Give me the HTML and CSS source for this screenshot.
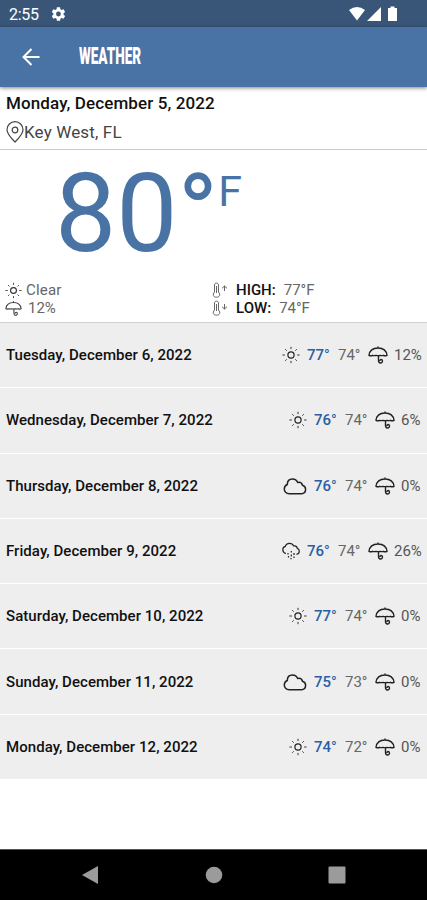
FILE: index.html
```html
<!DOCTYPE html>
<html lang="en">
<head>
    <meta charset="UTF-8">
    <meta name="viewport" content="width=device-width, initial-scale=1.0">
    <title>Weather</title>
    <link rel="stylesheet" href="styles.css">
</head>
<body>

<!-- shared icons -->
<svg class="sprite" width="0" height="0">
    <symbol id="sun" viewBox="0 0 18 18">
        <circle cx="9" cy="9" r="3.1"/>
        <path stroke-width=".9" d="M9 .8v2.300M9 14.900v2.300M.4 9h2.500M15.100 9h2.500M3.200 3.200l1.500 1.500M13.300 13.300l1.500 1.500M3.200 14.800l1.500-1.500M13.300 4.700l1.500-1.500"/>
    </symbol>
    <symbol id="umbrella" viewBox="0 0 20 18">
        <path d="M1 9.300C1.500 5.300 4.500 2 10 2s8.500 3.300 9 7.300q-1.800.9-3.600 0-1.600.7-3.400 0-2 .6-4 0-1.800.7-3.400 0-1.800.9-3.600 0zM10 .6V2"/>
        <path d="M10.500 9.500v5c0 3.300 4 3.200 4 .6 0-2.100-2.500-2.200-2.500-.2"/>
    </symbol>
    <symbol id="cloud" viewBox="0 0 24 18">
        <path d="M6.300 16.700C3 16.700 1.300 14.500 1.300 12c0-2.300 1.200-3.800 3-4.500C4.300 4.200 6.300 2 9.500 2c2.500 0 4.300 1.300 5.200 3.500 2.500-.5 4.300.7 4.800 2.800 2 .5 3.100 2 3.100 4 0 2.500-1.600 4.400-4.100 4.400z"/>
    </symbol>
    <symbol id="rain" viewBox="0 0 18 18">
        <path d="M4 11.500C2 11 .8 9.600.8 7.700c0-1.700 1-2.900 2.500-3.300C3.800 2.500 5.300 1.300 7.500 1.300c2 0 3.400.9 4.200 2.600 2-.2 3.400.9 3.600 2.500 1.400.5 2 1.500 2 2.800 0 1.700-1 2.800-2.800 3.100"/>
        <path d="M6 11v1.500M9.300 9v1.500M12 11v2M6.500 14v1.500M9.300 12.500v2M9 16v1.300M12 14.500v1.500"/>
    </symbol>
    <symbol id="thermo" viewBox="0 0 9 16">
        <path d="M2.500 10V3c0-2.500 4-2.500 4 0v7c2.500 2.800 1 5.200-2 5.200S0 12.800 2.500 10zM4.500 4v7"/>
    </symbol>
</svg>

<div class="status-bar">
    <span class="clock">2:55</span>
    <svg class="gear" viewBox="0 0 24 24"><path fill-rule="evenodd" d="M19.400 13l2.100 1.700-2.100 3.600-2.500-1-1.700 1-.4 2.700h-4.300l-.4-2.700-1.800-1-2.500 1-2.100-3.600L5.800 13v-2L3.700 9.300l2.100-3.600 2.500 1 1.800-1 .4-2.700h4.300l.4 2.700 1.700 1 2.500-1 2.100 3.600-2.100 1.700zM12.600 8.800a3.200 3.200 0 1 0 0 6.400 3.200 3.200 0 0 0 0-6.400z"/></svg>
    <svg class="signals" viewBox="0 0 52 16">
        <path d="M2 4Q10 -2 18 4L10 14.500z"/>
        <path d="M34 1v14H20z"/>
        <path d="M41 2h2.500V.5h4V2H50v13h-9z"/>
    </svg>
</div>

<div class="header">
    <svg class="back" viewBox="0 0 18 18"><path d="M17.500 9H2M9.500 1L1.500 9l8 8"/></svg>
    <h1 class="title">WEATHER</h1>
</div>

<div class="place">
    <div class="today">Monday, December 5, 2022</div>
    <div class="city">
        <svg class="pin" viewBox="0 0 18 22"><path d="M9 21C4.500 16.500 1 12.500 1 8.700a8 8 0 0 1 16 0C17 12.500 13.500 16.500 9 21z"/><circle cx="9" cy="9" r="2.800"/></svg>
        <span>Key West, FL</span>
    </div>
</div>

<div class="current">
    <div class="temp">80°<span class="unit">F</span></div>
    <div class="details">
        <div class="detail"><svg class="icon small"><use href="#sun"/></svg><span class="clear">Clear</span></div>
        <div class="detail"><svg class="thermo" viewBox="0 0 16 16"><use href="#thermo" width="9" height="16"/><path d="M12.500 9V4M10 6.300L12.500 4 15 6.300"/></svg><b class="high">HIGH:</b><span>77°F</span></div>
        <div class="detail"><svg class="icon small"><use href="#umbrella"/></svg><span class="chance">12%</span></div>
        <div class="detail"><svg class="thermo" viewBox="0 0 16 16"><use href="#thermo" width="9" height="16"/><path d="M12.500 4v5M10 6.700L12.500 9 15 6.700"/></svg><b class="low">LOW:</b><span>74°F</span></div>
    </div>
</div>

<div class="forecast">
    <div class="day">
        <span class="date">Tuesday, December 6, 2022</span>
        <svg class="icon"><use href="#sun"/></svg><span class="hi">77°</span><span class="lo">74°</span>
        <svg class="icon umbrella"><use href="#umbrella"/></svg><span class="rain wide">12%</span>
    </div>
    <div class="day">
        <span class="date">Wednesday, December 7, 2022</span>
        <svg class="icon"><use href="#sun"/></svg><span class="hi">76°</span><span class="lo">74°</span>
        <svg class="icon umbrella"><use href="#umbrella"/></svg><span class="rain">6%</span>
    </div>
    <div class="day">
        <span class="date">Thursday, December 8, 2022</span>
        <svg class="icon cloud"><use href="#cloud"/></svg><span class="hi">76°</span><span class="lo">74°</span>
        <svg class="icon umbrella"><use href="#umbrella"/></svg><span class="rain">0%</span>
    </div>
    <div class="day">
        <span class="date">Friday, December 9, 2022</span>
        <svg class="icon"><use href="#rain"/></svg><span class="hi">76°</span><span class="lo">74°</span>
        <svg class="icon umbrella"><use href="#umbrella"/></svg><span class="rain wide">26%</span>
    </div>
    <div class="day">
        <span class="date">Saturday, December 10, 2022</span>
        <svg class="icon"><use href="#sun"/></svg><span class="hi">77°</span><span class="lo">74°</span>
        <svg class="icon umbrella"><use href="#umbrella"/></svg><span class="rain">0%</span>
    </div>
    <div class="day">
        <span class="date">Sunday, December 11, 2022</span>
        <svg class="icon cloud"><use href="#cloud"/></svg><span class="hi">75°</span><span class="lo">73°</span>
        <svg class="icon umbrella"><use href="#umbrella"/></svg><span class="rain">0%</span>
    </div>
    <div class="day">
        <span class="date">Monday, December 12, 2022</span>
        <svg class="icon"><use href="#sun"/></svg><span class="hi">74°</span><span class="lo">72°</span>
        <svg class="icon umbrella"><use href="#umbrella"/></svg><span class="rain">0%</span>
    </div>
</div>

<div class="nav-bar">
    <svg viewBox="0 0 18 18"><path d="M17 0v18L1 9z"/></svg>
    <svg viewBox="0 0 18 18"><circle cx="9" cy="9" r="8.300"/></svg>
    <svg viewBox="0 0 18 18"><rect x=".5" y=".5" width="17" height="17" rx="1"/></svg>
</div>

</body>
</html>
```
FILE: styles.css
```css
body {
    margin: 0;
    height: 900px;
    display: flex;
    flex-direction: column;
    overflow: hidden;
    background: #fff;
    font-family: Roboto, "Liberation Sans", sans-serif;
    font-size: 15px;
    color: #111;
}

* {
    box-sizing: border-box;
}

svg {
    flex: none;
}

.sprite {
    position: absolute;
}

/* status bar */
.status-bar {
    height: 27px;
    flex: none;
    display: flex;
    align-items: center;
    padding: 1px 28px 0 9px;
    background: #395679;
    color: #fff;
    fill: #fff;
}

.clock {
    width: 40px;
    font-size: 16px;
    letter-spacing: -0.3px;
}

.gear {
    width: 18px;
    height: 18px;
}

.signals {
    width: 52px;
    height: 16px;
    margin-left: auto;
}

/* header */
.header {
    height: 60px;
    flex: none;
    display: flex;
    align-items: center;
    padding-left: 22px;
    background: #4973a5;
    box-shadow: 0 1px 4px rgba(0, 0, 0, 0.5);
    z-index: 1;
}

.back {
    width: 18px;
    height: 18px;
    fill: none;
    stroke: #fff;
    stroke-width: 2;
}

.title {
    margin: 0 0 2px 39px;
    font-size: 23px;
    font-weight: 900;
    color: #fff;
    transform: scaleX(0.588);
    transform-origin: left;
}

/* date and city */
.place {
    height: 63px;
    flex: none;
    padding: 6px 6px 0;
    border-bottom: 1px solid #c9c9c9;
}

.today {
    font-size: 17px;
    line-height: 20px;
    font-weight: 500;
    letter-spacing: 0.11px;
}

.city {
    display: flex;
    align-items: center;
    height: 24px;
    margin-top: 7px;
    font-size: 17px;
    letter-spacing: 0.15px;
    color: #444;
}

.pin {
    width: 18px;
    height: 22px;
    fill: none;
    stroke: #444;
    stroke-width: 1.2;
}

/* current weather */
.current {
    height: 173px;
    flex: none;
    border-bottom: 1px solid #d0d0d0;
}

.temp {
    display: flex;
    height: 131px;
    padding-left: 55px;
    font-size: 109px;
    line-height: 128px;
    color: #4973a5;
}

.unit {
    font-size: 43px;
    line-height: 82px;
}

.details {
    display: grid;
    grid-template-columns: 207px 1fr;
    grid-auto-rows: 18px;
    padding-left: 5px;
    color: #666;
}

.detail {
    display: flex;
    align-items: center;
}

.clear {
    letter-spacing: 0.2px;
}

.chance {
    margin-left: 2px;
}

.thermo {
    width: 16px;
    height: 16px;
    fill: none;
    stroke: #555;
    stroke-width: 0.9;
}

.detail b {
    margin: 0 8px 0 8px;
    font-weight: 500;
    color: #111;
}

.icon {
    width: 18px;
    height: 18px;
    fill: none;
    stroke: #222;
    stroke-width: 1.2;
}

.icon.small {
    width: 17px;
    height: 17px;
    margin-right: 4px;
    stroke: #333;
}

/* 7 day forecast */
.forecast {
    height: 457px;
    flex: none;
    display: flex;
    flex-direction: column;
}

.day {
    flex: 1;
    display: flex;
    align-items: center;
    padding: 0 6px 0 6px;
    background: #eee;
    border-bottom: 1px solid #fff;
}

.date {
    margin-right: auto;
    font-size: 15px;
    font-weight: 500;
    letter-spacing: 0.05px;
}

.hi {
    width: 24px;
    margin-left: 7px;
    font-weight: 500;
    color: #2a5fa5;
}

.lo {
    width: 23px;
    margin-left: 7px;
    color: #666;
}

.umbrella {
    width: 20px;
    margin-left: 7px;
    stroke-width: 1.4;
}

.cloud {
    width: 24px;
    stroke-width: 1.5;
}

.rain {
    width: 20px;
    margin-left: 6px;
    color: #555;
}

.rain.wide {
    width: 27px;
}

/* android buttons */
.nav-bar {
    height: 51px;
    margin-top: auto;
    display: flex;
    justify-content: space-between;
    align-items: center;
    padding: 0 81px;
    background: #000;
    border-top: 1px solid #555;
}

.nav-bar svg {
    width: 18px;
    height: 18px;
    fill: #9b9b9b;
}
```
